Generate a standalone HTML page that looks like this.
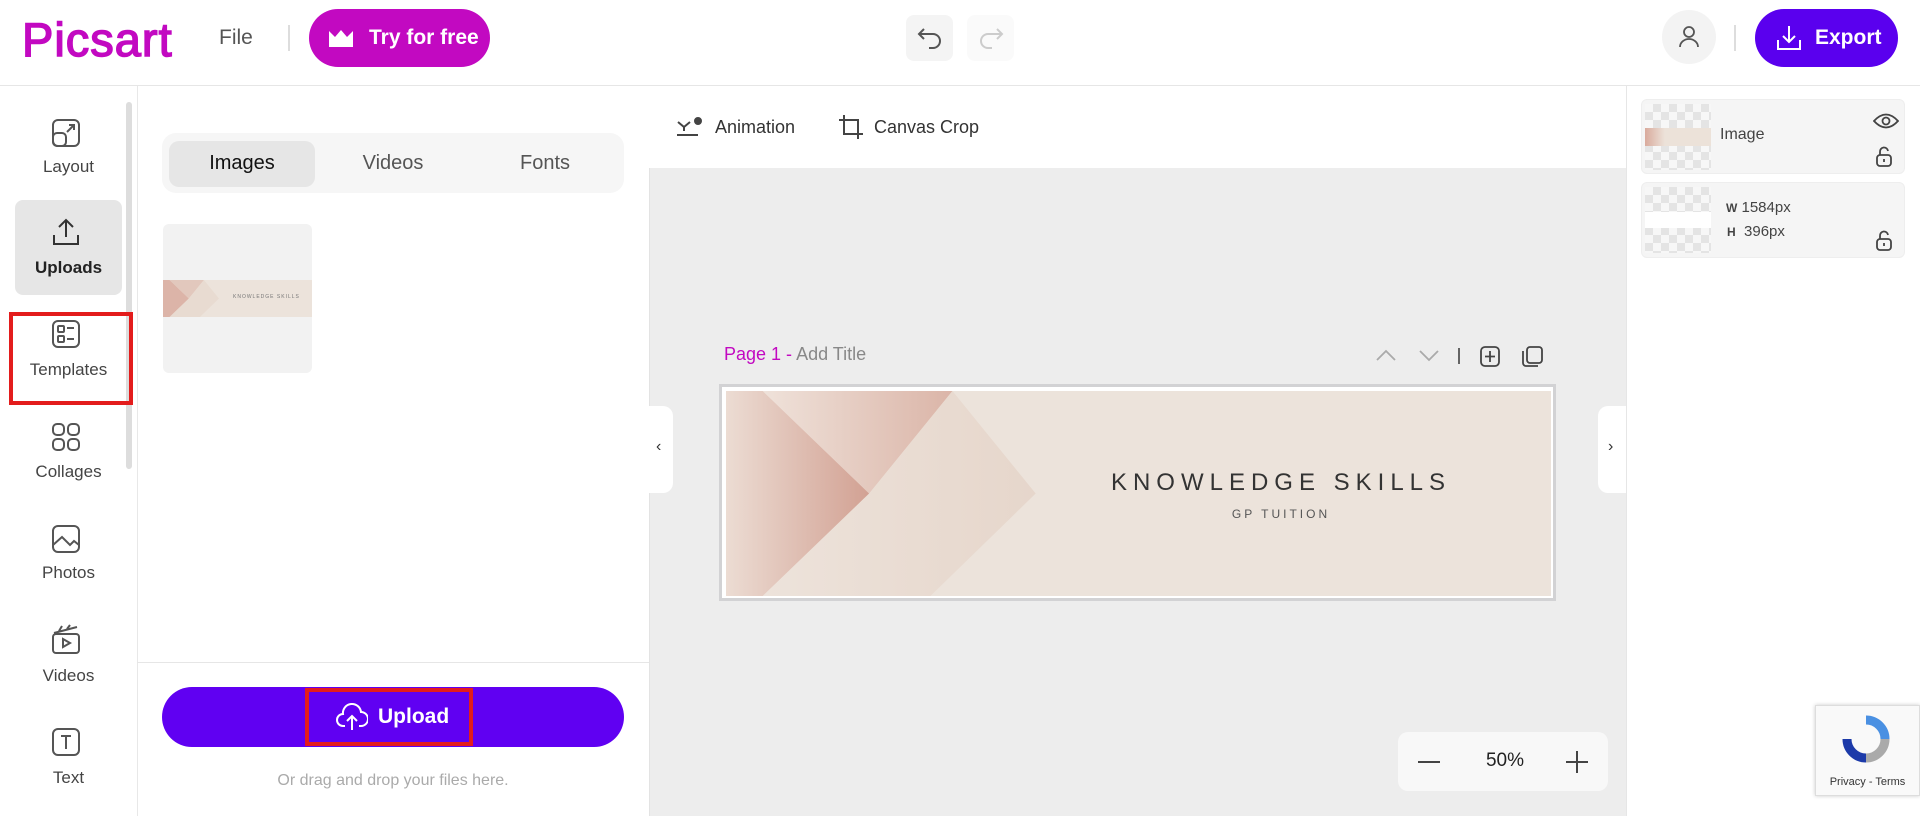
<!DOCTYPE html>
<html><head><meta charset="utf-8"><style>
*{box-sizing:border-box;margin:0;padding:0}
body{width:1920px;height:816px;overflow:hidden;background:#fff;font-family:"Liberation Sans",sans-serif;color:#333;position:relative}
.a{position:absolute}
.lbl{position:absolute;width:137px;text-align:center;font-size:17px;color:#444}
.ic{position:absolute;left:50px}
</style></head><body>
<!-- header -->
<div class="a" style="left:0;top:0;width:1920px;height:86px;border-bottom:1px solid #e6e6e6;background:#fff"></div>
<div class="a" style="left:22px;top:12px;font-size:47px;color:#c209c1;font-weight:normal;letter-spacing:1px;-webkit-text-stroke:1.5px #c209c1">Picsart</div>
<div class="a" style="left:219px;top:26px;font-size:21px;color:#555">File</div>
<div class="a" style="left:288px;top:25px;width:2px;height:26px;background:#ddd"></div>
<div class="a" style="left:309px;top:9px;width:181px;height:58px;border-radius:29px;background:#c209c1;color:#fff;font-size:21px;font-weight:bold;line-height:58px;padding-left:60px">Try for free</div>
<svg class="a" style="left:328px;top:28px" width="26" height="20" viewBox="0 0 26 20"><path d="M1 3 L7 9 L13 2 L19 9 L25 3 L25 19 L1 19Z" fill="#fff"/></svg>
<div class="a" style="left:906px;top:15px;width:47px;height:46px;border-radius:8px;background:#f4f4f4"></div>
<svg class="a" style="left:917px;top:26px" width="26" height="24" viewBox="0 0 26 24" fill="none" stroke="#555" stroke-width="2"><path d="M7 3 L2 8 L7 13"/><path d="M2 8 H16 A7 7 0 0 1 16 22 H12"/></svg>
<div class="a" style="left:967px;top:15px;width:47px;height:46px;border-radius:8px;background:#fafafa"></div>
<svg class="a" style="left:978px;top:26px" width="26" height="24" viewBox="0 0 26 24" fill="none" stroke="#ccc" stroke-width="2"><path d="M19 3 L24 8 L19 13"/><path d="M24 8 H10 A7 7 0 0 0 10 22 H14"/></svg>
<div class="a" style="left:1662px;top:10px;width:54px;height:54px;border-radius:50%;background:#f3f3f3"></div>
<svg class="a" style="left:1677px;top:25px" width="24" height="24" viewBox="0 0 24 24" fill="none" stroke="#555" stroke-width="1.8"><circle cx="12" cy="7" r="5"/><path d="M3 22 A9 8 0 0 1 21 22"/></svg>
<div class="a" style="left:1734px;top:25px;width:2px;height:26px;background:#ddd"></div>
<div class="a" style="left:1755px;top:9px;width:143px;height:58px;border-radius:29px;background:#5a00ee;color:#fff;font-size:21px;font-weight:bold;line-height:58px;padding-left:60px">Export</div>
<svg class="a" style="left:1775px;top:24px" width="28" height="28" viewBox="0 0 28 28" fill="none" stroke="#fff" stroke-width="2"><path d="M14 2 V18 M8 12 L14 18 L20 12"/><path d="M3 16 V25 H25 V16"/></svg>

<!-- left icon sidebar -->
<div class="a" style="left:137px;top:86px;width:1px;height:730px;background:#e8e8e8"></div>
<div class="a" style="left:126px;top:102px;width:6px;height:367px;border-radius:3px;background:#ddd"></div>
<svg class="ic" style="top:117px" width="32" height="32" viewBox="0 0 32 32" fill="none" stroke="#555" stroke-width="2"><rect x="3" y="3" width="26" height="26" rx="5"/><rect x="3" y="16" width="13" height="13" rx="4"/><path d="M17 15 L24 8 M19 8 H24 V13"/></svg>
<div class="lbl" style="top:157px">Layout</div>
<div class="a" style="left:15px;top:200px;width:107px;height:95px;border-radius:8px;background:#e6e6e6"></div>
<svg class="ic" style="top:216px" width="32" height="32" viewBox="0 0 32 32" fill="none" stroke="#333" stroke-width="2"><path d="M16 4 V21 M9 11 L16 4 L23 11"/><path d="M4 19 V28 H28 V19"/></svg>
<div class="lbl" style="top:258px;color:#222;font-weight:bold">Uploads</div>
<svg class="ic" style="top:318px" width="32" height="32" viewBox="0 0 32 32" fill="none" stroke="#555" stroke-width="2"><rect x="3" y="3" width="26" height="26" rx="5"/><rect x="8" y="8" width="6" height="6" rx="1"/><rect x="8" y="18" width="6" height="6" rx="1"/><path d="M17 10 H24 M17 21 H24"/></svg>
<div class="lbl" style="top:360px">Templates</div>
<div class="a" style="left:9px;top:312px;width:124px;height:93px;border:4px solid #e31c1c"></div>
<svg class="ic" style="top:421px" width="32" height="32" viewBox="0 0 32 32" fill="none" stroke="#555" stroke-width="2"><rect x="3" y="3" width="11" height="11" rx="4"/><rect x="18" y="3" width="11" height="11" rx="4"/><rect x="3" y="18" width="11" height="11" rx="4"/><rect x="18" y="18" width="11" height="11" rx="4"/></svg>
<div class="lbl" style="top:462px">Collages</div>
<svg class="ic" style="top:523px" width="32" height="32" viewBox="0 0 32 32" fill="none" stroke="#555" stroke-width="2"><rect x="3" y="3" width="26" height="26" rx="5"/><path d="M3 22 L12 14 L20 22 L24 18 L29 22"/></svg>
<div class="lbl" style="top:563px">Photos</div>
<svg class="ic" style="top:624px" width="32" height="32" viewBox="0 0 32 32" fill="none" stroke="#555" stroke-width="2"><rect x="3" y="10" width="26" height="19" rx="3"/><path d="M4 9 L27 3 M9 7 L12 2 M17 5 L20 1"/><path d="M13 15 L20 19 L13 23Z"/></svg>
<div class="lbl" style="top:666px">Videos</div>
<svg class="ic" style="top:726px" width="32" height="32" viewBox="0 0 32 32" fill="none" stroke="#555" stroke-width="2"><rect x="3" y="3" width="26" height="26" rx="5"/><path d="M11 10 H21 M16 10 V23"/></svg>
<div class="lbl" style="top:768px">Text</div>

<!-- panel -->
<div class="a" style="left:162px;top:133px;width:462px;height:60px;border-radius:14px;background:#f6f6f6"></div>
<div class="a" style="left:169px;top:141px;width:146px;height:46px;border-radius:10px;background:#e6e6e6"></div>
<div class="a" style="left:169px;top:152px;width:146px;text-align:center;font-size:20px;color:#111">Images</div>
<div class="a" style="left:320px;top:152px;width:146px;text-align:center;font-size:20px;color:#555">Videos</div>
<div class="a" style="left:472px;top:152px;width:146px;text-align:center;font-size:20px;color:#555">Fonts</div>
<div class="a" style="left:163px;top:224px;width:149px;height:149px;border-radius:6px;background:#f2f2f2;overflow:hidden">
<svg class="a" style="left:0;top:56px" width="149" height="37" viewBox="593 319 674 168" preserveAspectRatio="none"><rect x="593" y="319" width="674" height="168" fill="#ece3db"/><polygon points="593,319 623,319 710,403 623,487 593,487" fill="#dcb4a8"/><polygon points="623,319 778,319 710,403" fill="#e2c8bd"/><polygon points="778,319 846,403 760,487 623,487 710,403" fill="#e8dbd1"/></svg>
<div class="a" style="left:70px;top:70px;font-size:5px;letter-spacing:1px;color:#777">KNOWLEDGE SKILLS</div>
</div>
<div class="a" style="left:137px;top:662px;width:512px;height:1px;background:#e6e6e6"></div>
<div class="a" style="left:162px;top:687px;width:462px;height:60px;border-radius:30px;background:#6000f2"></div>
<div class="a" style="left:305px;top:688px;width:168px;height:58px;border:4px solid #e31c1c"></div>
<svg class="a" style="left:336px;top:702px" width="32" height="30" viewBox="0 0 32 30" fill="none" stroke="#fff" stroke-width="2"><path d="M9 24 H7 A6 6 0 0 1 7 12 A9 9 0 0 1 25 10 A6 6 0 0 1 25 24 H23"/><path d="M16 28 V15 M11 19 L16 14 L21 19"/></svg>
<div class="a" style="left:378px;top:705px;font-size:21px;font-weight:bold;color:#fff">Upload</div>
<div class="a" style="left:162px;top:772px;width:462px;text-align:center;font-size:16px;color:#aaa">Or drag and drop your files here.</div>

<!-- canvas area -->
<div class="a" style="left:649px;top:86px;width:977px;height:730px;background:#ededed;border-left:1px solid #e3e3e3"></div>
<div class="a" style="left:649px;top:86px;width:977px;height:82px;background:#fff"></div>
<svg class="a" style="left:676px;top:116px" width="30" height="22" viewBox="0 0 30 22" fill="none" stroke="#444" stroke-width="2"><path d="M2 6 L8 11 L14 6 M8 11 V15 M1 19 H22"/><circle cx="22" cy="5" r="3" fill="#444"/></svg>
<div class="a" style="left:715px;top:117px;font-size:18px;color:#333">Animation</div>
<svg class="a" style="left:838px;top:114px" width="26" height="26" viewBox="0 0 26 26" fill="none" stroke="#444" stroke-width="2"><path d="M6 1 V20 H25 M1 6 H20 V25"/></svg>
<div class="a" style="left:874px;top:117px;font-size:18px;color:#333">Canvas Crop</div>
<div class="a" style="left:649px;top:406px;width:24px;height:87px;background:#fff;border-radius:0 10px 10px 0"></div>
<div class="a" style="left:656px;top:438px;font-size:16px;color:#333">‹</div>
<div class="a" style="left:1598px;top:406px;width:28px;height:87px;background:#fff;border-radius:10px 0 0 10px"></div>
<div class="a" style="left:1608px;top:438px;font-size:16px;color:#333">›</div>
<div class="a" style="left:724px;top:344px;font-size:18px;color:#c209c1">Page 1 - <span style="color:#888">Add Title</span></div>
<svg class="a" style="left:1375px;top:344px" width="190" height="24" viewBox="0 0 190 24" fill="none" stroke="#aaa" stroke-width="1.8"><path d="M2 16 L11 7 L20 16"/><path d="M45 7 L54 16 L63 7"/><path d="M84 4 V20" stroke="#555"/><rect x="106" y="3" width="18" height="19" rx="4" stroke="#444"/><path d="M115 7 V18 M110 12.5 H120" stroke="#444"/><rect x="152" y="3" width="15" height="16" rx="3" stroke="#444"/><path d="M148 7 V19 A3 3 0 0 0 151 22 H163" stroke="#444"/></svg>
<div class="a" style="left:719px;top:384px;width:837px;height:217px;border:3px solid #d2d2d4;background:#fff"></div>
<svg class="a" style="left:726px;top:391px" width="825" height="205" viewBox="593 319 674 168" preserveAspectRatio="none">
<defs><linearGradient id="g1" x1="0" x2="1"><stop offset="0" stop-color="#ecdcd3"/><stop offset="1" stop-color="#d2a193"/></linearGradient>
<linearGradient id="g2" x1="0" x2="1"><stop offset="0" stop-color="#efe2da"/><stop offset="1" stop-color="#dbb5a8"/></linearGradient>
<linearGradient id="g3" x1="0" x2="1"><stop offset="0" stop-color="#ede3db"/><stop offset="1" stop-color="#e6d6cb"/></linearGradient></defs>
<rect x="593" y="319" width="674" height="168" fill="#ece3db"/>
<polygon points="593,319 623,319 710,403 623,487 593,487" fill="url(#g1)"/>
<polygon points="623,319 778,319 710,403" fill="url(#g2)"/>
<polygon points="778,319 846,403 760,487 623,487 710,403" fill="url(#g3)"/>
</svg>
<div class="a" style="left:1031px;top:469px;width:500px;text-align:center;font-size:24px;letter-spacing:6px;color:#333">KNOWLEDGE SKILLS</div>
<div class="a" style="left:1131px;top:507px;width:300px;text-align:center;font-size:12px;letter-spacing:3px;color:#555">GP TUITION</div>
<div class="a" style="left:1398px;top:732px;width:210px;height:59px;border-radius:10px;background:#f8f8f8"></div>
<div class="a" style="left:1418px;top:761px;width:22px;height:2px;background:#444"></div>
<div class="a" style="left:1470px;top:750px;width:70px;text-align:center;font-size:19px;color:#222">50%</div>
<div class="a" style="left:1566px;top:761px;width:22px;height:2px;background:#444"></div>
<div class="a" style="left:1576px;top:751px;width:2px;height:22px;background:#444"></div>

<!-- right panel -->
<div class="a" style="left:1626px;top:86px;width:1px;height:730px;background:#e6e6e6"></div>
<div class="a" style="left:1641px;top:99px;width:264px;height:75px;border-radius:6px;background:#f5f5f5;border:1px solid #eee"></div>
<div class="a" style="left:1645px;top:104px;width:66px;height:66px;background:repeating-conic-gradient(#e4e4e4 0 25%,#f7f7f7 0 50%) 0 0/16px 16px"></div>
<div class="a" style="left:1645px;top:128px;width:66px;height:18px;background:linear-gradient(90deg,#d9aa9c,#ece2d9 30%)"></div>
<div class="a" style="left:1720px;top:126px;font-size:16px;color:#444">Image</div>
<svg class="a" style="left:1873px;top:112px" width="26" height="18" viewBox="0 0 26 18" fill="none" stroke="#444" stroke-width="1.8"><path d="M1 9 Q13 -4 25 9 Q13 22 1 9Z"/><circle cx="13" cy="9" r="3.5"/></svg>
<svg class="a" style="left:1875px;top:146px" width="18" height="22" viewBox="0 0 18 22" fill="none" stroke="#444" stroke-width="1.8"><rect x="2" y="9" width="14" height="11" rx="3"/><path d="M5 9 V6 A4 4 0 0 1 13 5"/><path d="M9 13 V16"/></svg>
<div class="a" style="left:1641px;top:182px;width:264px;height:76px;border-radius:6px;background:#f5f5f5;border:1px solid #eee"></div>
<div class="a" style="left:1645px;top:187px;width:66px;height:66px;background:repeating-conic-gradient(#e4e4e4 0 25%,#f7f7f7 0 50%) 0 0/16px 16px"></div>
<div class="a" style="left:1645px;top:212px;width:66px;height:16px;background:#fff"></div>
<div class="a" style="left:1726px;top:199px;font-size:15px;color:#444"><b style="font-size:12px">W</b> 1584px</div>
<div class="a" style="left:1727px;top:223px;font-size:15px;color:#444"><b style="font-size:12px">H</b> &nbsp;396px</div>
<svg class="a" style="left:1875px;top:230px" width="18" height="22" viewBox="0 0 18 22" fill="none" stroke="#444" stroke-width="1.8"><rect x="2" y="9" width="14" height="11" rx="3"/><path d="M5 9 V6 A4 4 0 0 1 13 5"/><path d="M9 13 V16"/></svg>

<!-- recaptcha -->
<div class="a" style="left:1815px;top:705px;width:105px;height:91px;background:#f9f9f9;border:1px solid #ddd;box-shadow:0 0 4px rgba(0,0,0,.2)"></div>
<svg class="a" style="left:1839px;top:712px" width="54" height="54" viewBox="0 0 54 54" fill="none" stroke-width="9"><path d="M27 8 A19 19 0 0 1 46 27" stroke="#4a90e2"/><path d="M46 27 A19 19 0 0 1 27 46" stroke="#aaa"/><path d="M27 46 A19 19 0 0 1 8 27" stroke="#1c3aa9"/></svg>
<div class="a" style="left:1815px;top:776px;width:105px;text-align:center;font-size:11px;color:#333">Privacy - Terms</div>
</body></html>
